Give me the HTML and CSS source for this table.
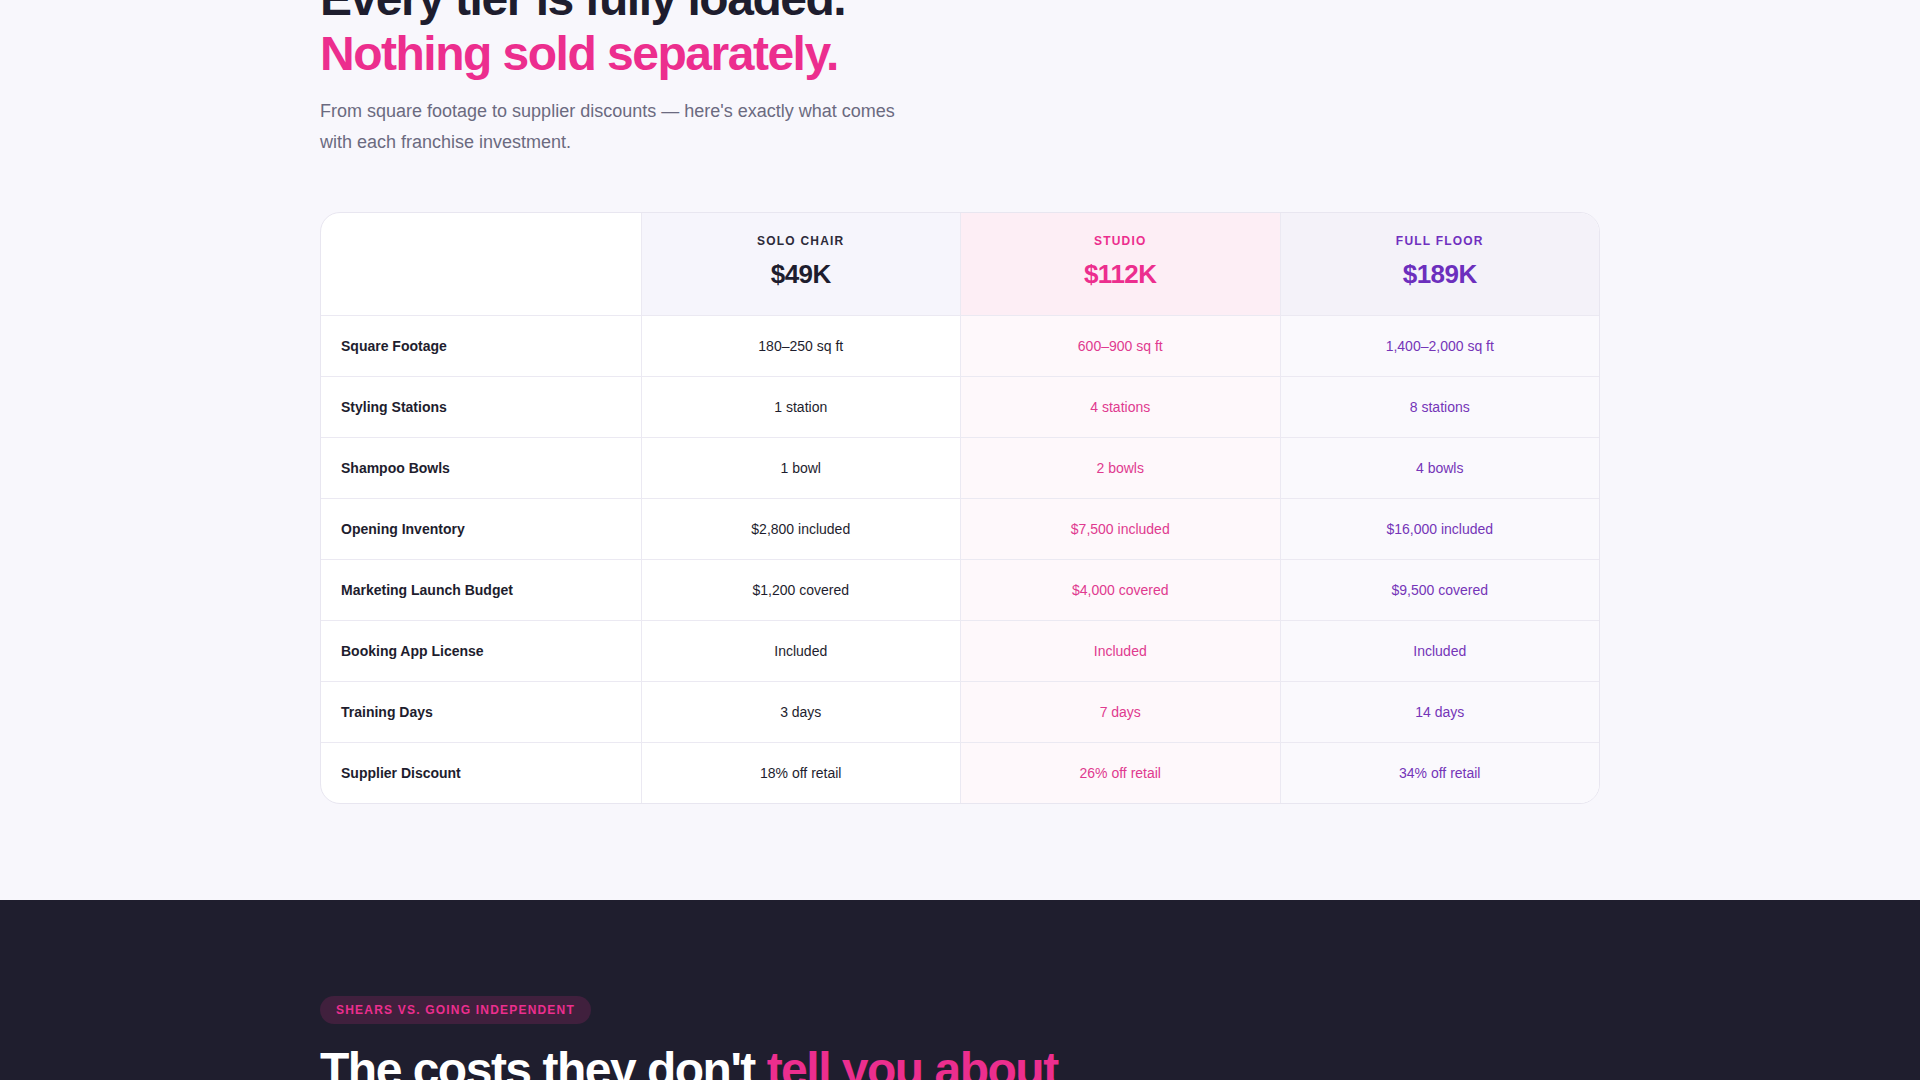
FILE: index.html
```html
<!DOCTYPE html>
<html lang="en">
<head>
<meta charset="utf-8">
<title>Every tier is fully loaded</title>
<link rel="stylesheet" href="styles.css">
</head>
<body>
<section class="included">
  <div class="container">
    <h2 class="title">Every tier is fully loaded.<br><span class="accent">Nothing sold separately.</span></h2>
    <p class="lead">From square footage to supplier discounts — here's exactly what comes with each franchise investment.</p>

    <div class="table">
      <div class="row head">
        <div class="cell label-cell"></div>
        <div class="cell tier solo"><span class="tier-name">SOLO CHAIR</span><span class="price">$49K</span></div>
        <div class="cell tier studio"><span class="tier-name">STUDIO</span><span class="price">$112K</span></div>
        <div class="cell tier full"><span class="tier-name">FULL FLOOR</span><span class="price">$189K</span></div>
      </div>
      <div class="row">
        <div class="cell label-cell">Square Footage</div>
        <div class="cell solo">180–250 sq ft</div>
        <div class="cell studio">600–900 sq ft</div>
        <div class="cell full">1,400–2,000 sq ft</div>
      </div>
      <div class="row">
        <div class="cell label-cell">Styling Stations</div>
        <div class="cell solo">1 station</div>
        <div class="cell studio">4 stations</div>
        <div class="cell full">8 stations</div>
      </div>
      <div class="row">
        <div class="cell label-cell">Shampoo Bowls</div>
        <div class="cell solo">1 bowl</div>
        <div class="cell studio">2 bowls</div>
        <div class="cell full">4 bowls</div>
      </div>
      <div class="row">
        <div class="cell label-cell">Opening Inventory</div>
        <div class="cell solo">$2,800 included</div>
        <div class="cell studio">$7,500 included</div>
        <div class="cell full">$16,000 included</div>
      </div>
      <div class="row">
        <div class="cell label-cell">Marketing Launch Budget</div>
        <div class="cell solo">$1,200 covered</div>
        <div class="cell studio">$4,000 covered</div>
        <div class="cell full">$9,500 covered</div>
      </div>
      <div class="row">
        <div class="cell label-cell">Booking App License</div>
        <div class="cell solo">Included</div>
        <div class="cell studio">Included</div>
        <div class="cell full">Included</div>
      </div>
      <div class="row">
        <div class="cell label-cell">Training Days</div>
        <div class="cell solo">3 days</div>
        <div class="cell studio">7 days</div>
        <div class="cell full">14 days</div>
      </div>
      <div class="row">
        <div class="cell label-cell">Supplier Discount</div>
        <div class="cell solo">18% off retail</div>
        <div class="cell studio">26% off retail</div>
        <div class="cell full">34% off retail</div>
      </div>
    </div>
  </div>
</section>

<section class="versus">
  <div class="container">
    <span class="badge">SHEARS VS. GOING INDEPENDENT</span>
    <h2 class="title light">The costs they don't <span class="accent">tell you about</span></h2>
  </div>
</section>
</body>
</html>
```

FILE: styles.css
```css
* { box-sizing: border-box; }

html, body {
  margin: 0;
  padding: 0;
}

body {
  font-family: "Liberation Sans", Arial, Helvetica, sans-serif;
  background: #f8f7fc;
  color: #1e1d2e;
}

.container {
  width: 1280px;
  margin: 0 auto;
}

.included {
  margin-top: -29px;
  padding-bottom: 96px;
}

.title {
  margin: 0;
  font-size: 48px;
  line-height: 1.15;
  font-weight: 700;
  letter-spacing: -1.5px;
  color: #1e1d2e;
}

.title .accent { color: #ec2e8e; }

.title.light { color: #ffffff; }

.lead {
  margin: 15px 0 0;
  max-width: 600px;
  font-size: 18px;
  line-height: 1.7;
  color: #6b6a80;
}

.table {
  margin-top: 54px;
  background: #ffffff;
  border: 1px solid #e8e6f0;
  border-radius: 20px;
  overflow: hidden;
}

.row {
  display: grid;
  grid-template-columns: repeat(4, 1fr);
  border-top: 1px solid #ebe9f2;
}

.row.head { border-top: none; }

.cell {
  height: 60px;
  display: flex;
  align-items: center;
  justify-content: center;
  font-size: 14px;
  border-left: 1px solid #ebe9f2;
}

.cell.label-cell {
  justify-content: flex-start;
  padding-left: 20px;
  font-weight: 700;
  color: #1e1d2e;
  border-left: none;
}

.cell.solo { color: #1e1d2e; background: #ffffff; }
.cell.studio { color: #e03a8f; background: #fef8fb; }
.cell.full { color: #7535b8; background: #faf9fd; }

.head .cell {
  height: 102px;
}

.tier {
  flex-direction: column;
  justify-content: flex-start;
  padding: 21px 16px 0;
}

.head .cell.solo { background: #f6f5fc; }
.head .cell.studio { background: #fdeef5; }
.head .cell.full { background: #f4f2f9; }

.tier-name {
  font-size: 12px;
  font-weight: 700;
  letter-spacing: 1.2px;
  line-height: 14px;
}

.price {
  margin-top: 11px;
  font-size: 26px;
  font-weight: 700;
  line-height: 30px;
  letter-spacing: -0.5px;
}

.solo .tier-name { color: #2d2b3a; }
.solo .price { color: #1e1d2e; }
.studio .tier-name, .studio .price { color: #ec2e8e; }
.full .tier-name { color: #7030c0; }
.full .price { color: #6c2fbd; }

.versus {
  background: #1f1e2e;
  padding-top: 96px;
  padding-bottom: 96px;
}

.badge {
  display: inline-flex;
  align-items: center;
  height: 28px;
  padding: 0 16px;
  border-radius: 14px;
  background: rgba(236, 46, 142, 0.16);
  color: #ec2e8e;
  font-size: 12px;
  font-weight: 700;
  letter-spacing: 1.2px;
}

.versus .title { margin-top: 18px; }
```
